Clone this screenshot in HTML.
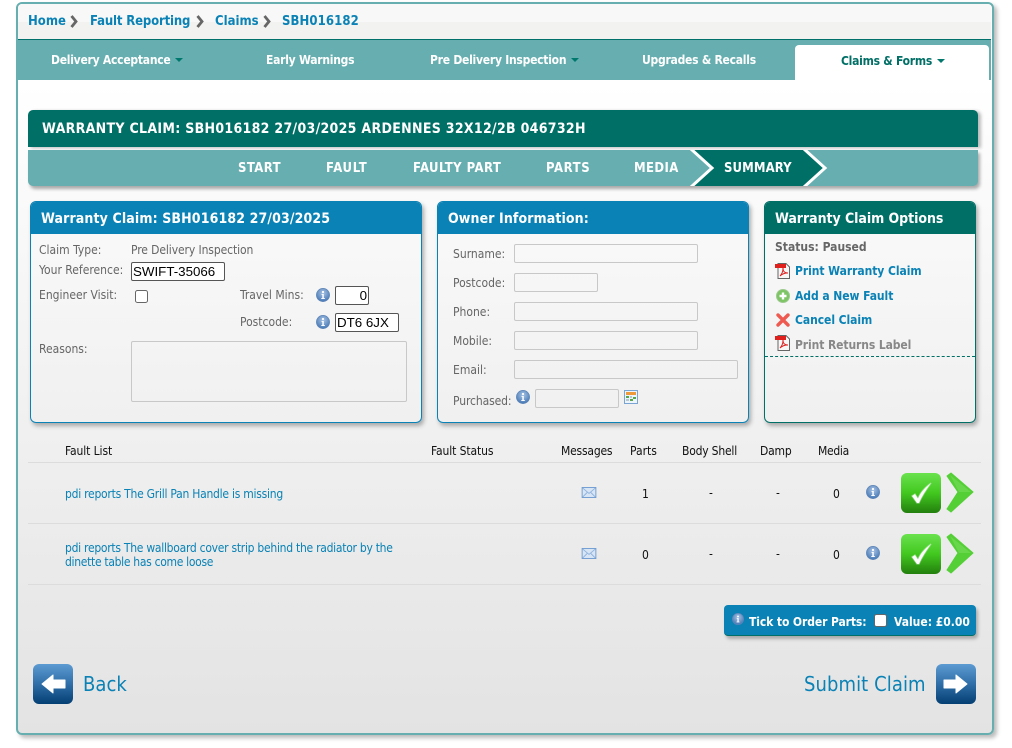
<!DOCTYPE html>
<html><head><meta charset="utf-8"><title>Warranty Claim</title>
<style>
html,body{margin:0;padding:0;background:#fff;width:1012px;height:748px;overflow:hidden}
body{position:relative;font-family:"DejaVu Sans Condensed","DejaVu Sans","Liberation Sans",sans-serif;font-size:12px;color:#666}
.a,.t,svg.i{position:absolute}
.t{white-space:nowrap;line-height:14px}
.b{font-weight:bold}
.w{color:#fff}
.l{color:#0a82b5}
.k{color:#111}
.n{letter-spacing:-.25px}
.s{font-size:13px;letter-spacing:.45px;top:162px}
.inp{position:absolute;box-sizing:border-box;border:1px solid #c8c8c8;border-radius:2px;height:19px}
.dark{position:absolute;box-sizing:border-box;border:1px solid #555;background:#fff;border-radius:2px;font:13.33px/17px "Liberation Sans",sans-serif;color:#000;padding:0 1px;height:19px;white-space:nowrap}
.panel{position:absolute;box-sizing:border-box;top:201px;height:222px;border:1px solid #0a82b5;border-radius:6px;background:linear-gradient(#fafafa,#f0f0f0);box-shadow:2px 3px 4px #aaa;overflow:hidden}
.ph{position:absolute;left:0;right:0;top:0;height:32px;background:#0a82b5}
.cb{position:absolute;box-sizing:border-box;width:13px;height:13px;border:1px solid #666;border-radius:2.5px;background:#fff}
.rule{position:absolute;left:28px;width:953px;height:1px;background:#dcdcdc}
.tri{position:absolute;width:0;height:0;border-left:4px solid transparent;border-right:4px solid transparent;border-top:4px solid #00786e}
</style></head><body>
<svg width="0" height="0" style="position:absolute"><defs>
<radialGradient id="gi" cx="50%" cy="35%" r="60%"><stop offset="0" stop-color="#a9c3e4"/><stop offset="1" stop-color="#4c7db8"/></radialGradient>
<linearGradient id="gg" x1="0" y1="0" x2="0" y2="1"><stop offset="0" stop-color="#6ae24e"/><stop offset=".5" stop-color="#42c81f"/><stop offset="1" stop-color="#237f0e"/></linearGradient>
<linearGradient id="gb" x1="0" y1="0" x2="0" y2="1"><stop offset="0" stop-color="#5c9ad2"/><stop offset=".5" stop-color="#2f6ea8"/><stop offset="1" stop-color="#043f73"/></linearGradient>
<symbol id="info" viewBox="0 0 14 14"><circle cx="7" cy="7" r="6.6" fill="url(#gi)" stroke="#5f86b8" stroke-width=".7"/><circle cx="7" cy="4" r="1.1" fill="#fff"/><path d="M5.6 6h2.2v4h1v1H5.3v-1h1V7h-.7z" fill="#fff"/></symbol>
<symbol id="pdf" viewBox="0 0 16 16"><path d="M3 .5h8l3.500 3.500V15.500H3z" fill="#f7f7f7" stroke="#666" stroke-width="1"/><path d="M0 1h11v4H0z" fill="#e0201c"/><path d="M5 13c2-2 3-5 3-8 0 3 1 5 5 5-3 0-6 1-8 3z" fill="none" stroke="#d22" stroke-width="1"/></symbol>
<symbol id="tick" viewBox="0 0 41 41"><rect x="0" y="0" width="40" height="40" rx="6" fill="url(#gg)"/><path d="M11 23l3-2 3 4.500C20 18 25 14 30 10 25 17 21 23 18 30h-2z" fill="#fff" stroke="#fff" stroke-opacity=".35" stroke-width="1.500"/></symbol>
<symbol id="chev" viewBox="0 0 28 42"><path d="M1 4L5 1 27 20 5 40 1 37 12 20z" fill="#54cf36" stroke="#54cf36" stroke-linejoin="round"/><path d="M4 3L25 20H13z" fill="#7be060" opacity=".5"/></symbol>
<symbol id="mail" viewBox="0 0 16 12"><rect x=".5" y=".5" width="15" height="11" fill="#d8e5f5" stroke="#6d9ad0"/><path d="M1 1l7 6 7-6M1 11l5-5M15 11l-5-5" fill="none" stroke="#8fb2dc"/></symbol>
</defs></svg>

<div class="a" style="left:16px;top:2px;width:978px;height:733px;box-sizing:border-box;border:2px solid #66aeaf;border-radius:6px;background:linear-gradient(#fff 80px,#fafafa 190px,#e3e3e3);box-shadow:3px 3px 4px #bbb"></div>
<div class="a" style="left:18px;top:4px;width:973px;height:35px;border-radius:4px 4px 0 0;background:linear-gradient(#f8f8f8 18px,#f2f2f0 18px)"></div>
<div class="a" style="left:18px;top:39px;width:973px;height:1px;background:#00706a"></div>
<div class="a" style="left:18px;top:40px;width:973px;height:40px;background:#66aeb0"></div>
<div class="a" style="left:795px;top:45px;width:194px;height:35px;background:#fff;border-radius:4px 4px 0 0"></div>

<span class="t b l" style="left:28px;top:15px;font-size:13px">Home</span>
<span class="t b l" style="left:90px;top:15px;font-size:13px;letter-spacing:-.15px">Fault Reporting</span>
<span class="t b l" style="left:215px;top:15px;font-size:13px">Claims</span>
<span class="t b l" style="left:282px;top:15px;font-size:13px;letter-spacing:.1px">SBH016182</span>
<svg class="i" style="left:70px;top:15px" width="8" height="13"><path d="M1.500 1l4.500 5.500-4.500 5.500" fill="none" stroke="#666" stroke-width="2.800"/></svg>
<svg class="i" style="left:196px;top:15px" width="8" height="13"><path d="M1.500 1l4.500 5.500-4.500 5.500" fill="none" stroke="#666" stroke-width="2.800"/></svg>
<svg class="i" style="left:263px;top:15px" width="8" height="13"><path d="M1.500 1l4.500 5.500-4.500 5.500" fill="none" stroke="#666" stroke-width="2.800"/></svg>

<span class="t b w n" style="left:51px;top:53px">Delivery Acceptance</span><i class="tri" style="left:175px;top:58px"></i>
<span class="t b w n" style="left:266px;top:53px">Early Warnings</span>
<span class="t b w n" style="left:430px;top:53px">Pre Delivery Inspection</span><i class="tri" style="left:571px;top:58px"></i>
<span class="t b w n" style="left:642px;top:53px">Upgrades &amp; Recalls</span>
<span class="t b n" style="left:841px;top:54px;color:#006f66">Claims &amp; Forms</span><i class="tri" style="left:937px;top:59px"></i>

<div class="a" style="left:28px;top:110px;width:950px;height:37px;background:#006f66;border-radius:5px 5px 0 0;box-shadow:3px 1px 3px #bbb"></div>
<div class="a" style="left:28px;top:150px;width:950px;height:36px;background:#66aeb0;border-radius:0 0 5px 5px;box-shadow:2px 3px 3px #aaa"></div>
<svg class="i" style="left:688px;top:150px" width="142" height="36"><path d="M3 0H116L137 18 116 36H3L24 18z" fill="#006f66"/><path d="M3 -1L24 18 3 37M116 -1L137 18 116 37" fill="none" stroke="#fff" stroke-width="3"/></svg>
<span class="t b" style="left:42px;top:122px;font-size:14px;letter-spacing:.3px;color:#fff">WARRANTY CLAIM: SBH016182 27/03/2025 ARDENNES 32X12/2B 046732H</span>
<span class="t b w s" style="left:238px">START</span>
<span class="t b w s" style="left:326px;letter-spacing:.7px">FAULT</span>
<span class="t b w s" style="left:413px">FAULTY PART</span>
<span class="t b w s" style="left:546px;letter-spacing:.6px">PARTS</span>
<span class="t b w s" style="left:634px;letter-spacing:.4px">MEDIA</span>
<span class="t b w s" style="left:724px;letter-spacing:.1px">SUMMARY</span>

<div class="panel" style="left:30px;width:392px"><div class="ph"></div></div>
<div class="panel" style="left:437px;width:312px"><div class="ph"></div></div>
<div class="panel" style="left:764px;width:212px;border-color:#006f66"><div class="ph" style="background:#006f66"></div>
<div class="a" style="left:0;right:0;top:154px;border-top:1px dashed #006f66"></div></div>

<span class="t b w" style="left:41px;top:212px;font-size:14px;letter-spacing:.12px">Warranty Claim: SBH016182 27/03/2025</span>
<span class="t" style="left:39px;top:243px">Claim Type:</span>
<span class="t" style="left:131px;top:243px;letter-spacing:-.1px">Pre Delivery Inspection</span>
<span class="t" style="left:39px;top:263px">Your Reference:</span>
<div class="dark" style="left:131px;top:262px;width:94px">SWIFT-35066</div>
<span class="t" style="left:39px;top:288px">Engineer Visit:</span>
<div class="cb" style="left:135px;top:290px"></div>
<span class="t" style="left:240px;top:288px">Travel Mins:</span>
<svg class="i" style="left:316px;top:288px" width="14" height="14"><use href="#info"/></svg>
<div class="dark" style="left:335px;top:286px;width:34px;text-align:right">0</div>
<span class="t" style="left:240px;top:315px">Postcode:</span>
<svg class="i" style="left:316px;top:315px" width="14" height="14"><use href="#info"/></svg>
<div class="dark" style="left:335px;top:313px;width:64px">DT6 6JX</div>
<span class="t" style="left:39px;top:342px">Reasons:</span>
<div class="inp" style="left:131px;top:341px;width:276px;height:61px"></div>

<span class="t b w" style="left:448px;top:212px;font-size:14px;letter-spacing:.1px">Owner Information:</span>
<span class="t" style="left:453px;top:247px">Surname:</span><div class="inp" style="left:514px;top:244px;width:184px"></div>
<span class="t" style="left:453px;top:276px">Postcode:</span><div class="inp" style="left:514px;top:273px;width:84px"></div>
<span class="t" style="left:453px;top:305px">Phone:</span><div class="inp" style="left:514px;top:302px;width:184px"></div>
<span class="t" style="left:453px;top:334px">Mobile:</span><div class="inp" style="left:514px;top:331px;width:184px"></div>
<span class="t" style="left:453px;top:363px">Email:</span><div class="inp" style="left:514px;top:360px;width:224px"></div>
<span class="t" style="left:453px;top:394px;letter-spacing:-.1px">Purchased:</span>
<svg class="i" style="left:516px;top:390px" width="14" height="14"><use href="#info"/></svg>
<div class="inp" style="left:535px;top:389px;width:84px"></div>
<svg class="i" style="left:624px;top:390px" width="14" height="14"><rect x=".5" y=".5" width="13" height="13" fill="#eef4fb" stroke="#7aa5d2"/><rect x="2" y="2" width="10" height="3" fill="#ee9a3a"/><path d="M2 6h3v2H2zM9 7h3v2H9zM6 9h3v2H6z" fill="#58a848"/><path d="M6 6h2v2H6zM2 9h3v2H2z" fill="#b8c4d0"/></svg>

<span class="t b w" style="left:775px;top:212px;font-size:14px;letter-spacing:-.05px">Warranty Claim Options</span>
<span class="t b" style="left:775px;top:240px">Status: Paused</span>
<svg class="i" style="left:775px;top:263px" width="16" height="16"><use href="#pdf"/></svg>
<span class="t b l" style="left:795px;top:264px;letter-spacing:-.06px">Print Warranty Claim</span>
<svg class="i" style="left:776px;top:289px" width="14" height="14"><circle cx="7" cy="7" r="6.500" fill="#7cc464" stroke="#9bc98c"/><path d="M5.800 3.500h2.400v2.300h2.300v2.400H8.200v2.300H5.800V8.200H3.500V5.800h2.300z" fill="#fff"/></svg>
<span class="t b l" style="left:795px;top:289px;letter-spacing:-.06px">Add a New Fault</span>
<svg class="i" style="left:776px;top:313px" width="14" height="14"><path d="M2 2l10 10M12 2L2 12" stroke="#ee5a50" stroke-width="3.400" stroke-linecap="round"/></svg>
<span class="t b l" style="left:795px;top:313px;letter-spacing:-.06px">Cancel Claim</span>
<svg class="i" style="left:775px;top:335px" width="16" height="16"><use href="#pdf"/></svg>
<span class="t b" style="left:795px;top:338px;color:#888;letter-spacing:-.1px">Print Returns Label</span>

<span class="t k" style="left:65px;top:444px;letter-spacing:-.1px">Fault List</span>
<span class="t k" style="left:431px;top:444px;letter-spacing:-.1px">Fault Status</span>
<span class="t k" style="left:561px;top:444px;letter-spacing:-.2px">Messages</span>
<span class="t k" style="left:630px;top:444px">Parts</span>
<span class="t k" style="left:682px;top:444px;letter-spacing:-.2px">Body Shell</span>
<span class="t k" style="left:760px;top:444px;letter-spacing:-.2px">Damp</span>
<span class="t k" style="left:818px;top:444px;letter-spacing:-.3px">Media</span>
<div class="rule" style="top:462px"></div>
<div class="rule" style="top:523px"></div>
<div class="rule" style="top:584px"></div>

<span class="t l" style="left:65px;top:487px;letter-spacing:-.25px">pdi reports The Grill Pan Handle is missing</span>
<span class="t l" style="left:65px;top:541px;letter-spacing:-.27px">pdi reports The wallboard cover strip behind the radiator by the</span>
<span class="t l" style="left:65px;top:555px;letter-spacing:-.31px">dinette table has come loose</span>

<svg class="i" style="left:581px;top:487px" width="16" height="11"><use href="#mail"/></svg>
<svg class="i" style="left:581px;top:548px" width="16" height="11"><use href="#mail"/></svg>
<span class="t k" style="left:642px;top:487px">1</span><span class="t k" style="left:709px;top:486px">-</span><span class="t k" style="left:776px;top:486px">-</span><span class="t k" style="left:833px;top:487px">0</span>
<span class="t k" style="left:642px;top:548px">0</span><span class="t k" style="left:709px;top:547px">-</span><span class="t k" style="left:776px;top:547px">-</span><span class="t k" style="left:833px;top:548px">0</span>
<svg class="i" style="left:866px;top:485px" width="14" height="14"><use href="#info"/></svg>
<svg class="i" style="left:866px;top:546px" width="14" height="14"><use href="#info"/></svg>
<svg class="i" style="left:901px;top:473px" width="41" height="41"><use href="#tick"/></svg>
<svg class="i" style="left:901px;top:534px" width="41" height="41"><use href="#tick"/></svg>
<svg class="i" style="left:946px;top:472px" width="28" height="42"><use href="#chev"/></svg>
<svg class="i" style="left:946px;top:533px" width="28" height="42"><use href="#chev"/></svg>

<div class="a" style="left:724px;top:605px;width:252px;height:31px;background:#0a82b5;border-radius:4px;border-bottom:1px solid #00706a;box-sizing:border-box;box-shadow:2px 3px 3px #aaa"></div>
<svg class="i" style="left:732px;top:613px" width="12" height="12"><use href="#info"/></svg>
<span class="t b w" style="left:749px;top:615px;letter-spacing:-.1px">Tick to Order Parts:</span>
<div class="cb" style="left:874px;top:614px"></div>
<span class="t b w" style="left:894px;top:615px">Value: £0.00</span>

<svg class="i" style="left:33px;top:664px" width="40" height="40"><rect width="40" height="40" rx="6" fill="url(#gb)"/><path d="M9 20l11-9v5h12v8H20v5z" fill="#fff" stroke="#fff" stroke-linejoin="round"/></svg>
<span class="t l" style="left:83px;top:671px;font-size:20px;line-height:26px;letter-spacing:.05px">Back</span>
<span class="t l" style="left:804px;top:671px;font-size:20px;line-height:26px;letter-spacing:.08px">Submit Claim</span>
<svg class="i" style="left:936px;top:664px" width="40" height="40"><rect width="40" height="40" rx="6" fill="url(#gb)"/><path d="M31 20L20 11v5H8v8h12v5z" fill="#fff" stroke="#fff" stroke-linejoin="round"/></svg>
</body></html>
